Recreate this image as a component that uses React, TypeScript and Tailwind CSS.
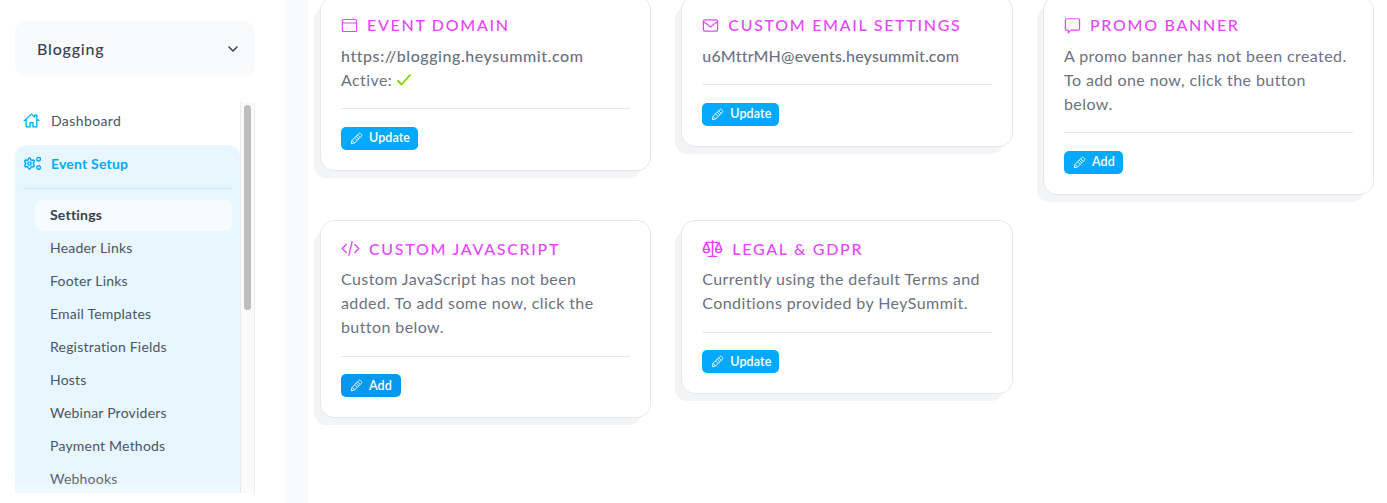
import React from 'react';
import { Settings } from 'lucide-react';

const font = "font-['Lato','Noto_Sans',sans-serif]";

function Icon({ children, className }: { children: React.ReactNode; className: string }) {
  return (
    <svg viewBox="0 0 24 24" fill="none" stroke="currentColor" strokeWidth="1.7" strokeLinecap="round" strokeLinejoin="round" className={className}>
      {children}
    </svg>
  );
}

function PencilIcon() {
  return (
    <svg viewBox="0 0 16 16" fill="none" stroke="currentColor" strokeWidth="1.1" strokeLinejoin="round" className="w-[13px] h-[13px] shrink-0">
      <path d="M1.5 14.5l1-4.2L10.8 2a1.6 1.6 0 012.3 0l.9.9a1.6 1.6 0 010 2.3l-8.3 8.3-4.2 1z" />
      <path d="M9.4 3.4l3.2 3.2M7.6 5.2l3.2 3.2M5.6 7.2l3.2 3.2M2.6 10.3l3.1 3.1" />
    </svg>
  );
}

function ActionButton({ label, dark }: { label: string; dark?: boolean }) {
  return (
    <button className={`flex items-center h-[23px] pl-[9px] gap-[6px] rounded-[5px] text-white text-[12.5px] font-semibold tracking-[0.1px] ${dark ? 'bg-[#0598ee] pr-[9px]' : 'bg-[#02a9fc] pr-[8px]'}`}>
      <PencilIcon />
      {label}
    </button>
  );
}

function Card({ icon, title, button, dark, children }: { icon: React.ReactNode; title: string; button: string; dark?: boolean; children: React.ReactNode }) {
  return (
    <div className="bg-white border border-[#e5e7eb] rounded-[14px] px-5 pt-4 pb-5 shadow-[-8px_9px_0_-2px_#f3f4f6]">
      <div className="flex items-center h-6 gap-[9px] text-[#e546fb] mb-[6.5px]">
        {icon}
        <h3 className="text-[16px] font-medium uppercase tracking-[1.7px] leading-6">{title}</h3>
      </div>
      <div className="text-[16px] leading-6 text-[#6b7280] tracking-[0.41px]">{children}</div>
      <div className="border-t border-[#e5e7eb] mt-[16.5px] mb-[17.5px]" />
      <div className="flex">
        <ActionButton label={button} dark={dark} />
      </div>
    </div>
  );
}

const subItems = ['Header Links', 'Footer Links', 'Email Templates', 'Registration Fields', 'Hosts', 'Webinar Providers', 'Payment Methods', 'Webhooks'];

export default function App() {
  return (
    <div className={`flex h-[503px] w-[1387px] overflow-hidden bg-white ${font}`}>
      {/* Sidebar */}
      <aside className="w-[285px] shrink-0 pl-[15px] pr-[30px] pt-[21px]">
        <div className="flex items-center justify-between h-[56px] pl-[22px] pr-[14px] bg-[#f9fafb] rounded-xl text-[#374151]">
          <span className="text-[16px] font-medium tracking-[0.8px]">Blogging</span>
          <Icon className="w-4 h-4"><path d="M6 9l6 6 6-6" strokeWidth="2.2" /></Icon>
        </div>

        <div className="flex mt-[25px] h-[391px] overflow-hidden">
          <nav className="w-[225px] shrink-0 relative">
            <a className="flex items-center h-[37px] mb-[6px] pl-[8px] gap-[11px] text-[14px] text-[#4b5563] tracking-[0.4px]">
              <svg viewBox="0 0 24 24" fill="none" stroke="#02a9fc" strokeWidth="1.8" strokeLinecap="round" strokeLinejoin="round" className="w-[17px] h-[17px] shrink-0">
                <path d="M1.5 12.5L12 3l4.5 4V4.5h3V10l3 2.5M4.5 10.5V21H10v-6h4v6h5.5V10.5" />
              </svg>
              Dashboard
            </a>
            <div className="bg-[#e8f6ff] rounded-t-xl h-[348px]">
              <a className="flex items-center h-[37px] mb-[6px] pl-[8px] gap-[10px] text-[14px] font-bold text-[#02a9fc] tracking-[0.2px]">
                <svg viewBox="0 0 18 13" fill="none" stroke="currentColor" className="w-[18px] h-[13px] shrink-0">
                  <Settings x="0" y="0" width="13" height="13" strokeWidth="2.7" />
                  <circle cx="15.6" cy="2.2" r="1.8" strokeWidth="1.4" />
                  <circle cx="15.6" cy="10.6" r="1.8" strokeWidth="1.4" />
                </svg>
                Event Setup
              </a>
              <div className="border-t border-[#c8ecfe] mx-[8px]" />
              <ul className="pl-[20px] pr-[8px] pt-[11px] text-[14px] text-[#4b5563] tracking-[0.015em]">
                <li className="flex items-center h-[31px] pl-[15px] pb-[3px] rounded-lg bg-[#f5fbff] font-bold text-[#374151]">Settings</li>
                {subItems.map((item) => (
                  <li key={item} className="flex items-center h-[33px] pl-[15px]">{item}</li>
                ))}
              </ul>
            </div>
            <div className="absolute bottom-0 inset-x-0 h-5 bg-gradient-to-b from-[#ffffff00] to-[#ffffff50]" />
          </nav>
          <div className="w-[15px] shrink-0 bg-[#fafafa] border-x border-[#ebebeb] px-[3px] pt-[3px]">
            <div className="h-[205px] rounded-full bg-[#bdbdbd]" />
          </div>
        </div>
      </aside>

      <div className="w-[23px] shrink-0 bg-[#f9fafb]" />

      {/* Cards */}
      <main className="flex-1 pl-3 -mt-1">
        <div className="grid grid-cols-[331px_331.4px_331px] gap-x-[30.3px] gap-y-[25.4px] items-start">
          <Card
            title="Event Domain"
            button="Update"
            icon={<Icon className="w-[17px] h-[17px] shrink-0"><rect x="2" y="3.5" width="20" height="17" rx="1.5" /><path d="M2 8.5h20" /></Icon>}
          >
            <p className="font-medium tracking-[0.55px]">https://blogging.heysummit.com</p>
            <p className="flex items-center gap-[4px]">
              Active:
              <svg viewBox="0 0 16 16" fill="none" stroke="#7ed300" strokeWidth="1.8" className="w-[16px] h-[16px]"><path d="M1.5 8.5l4 4L14.5 2.5" /></svg>
            </p>
          </Card>
          <Card
            title="Custom Email Settings"
            button="Update"
            icon={<Icon className="w-[17px] h-[17px] shrink-0"><rect x="2" y="4" width="20" height="16" rx="2" /><path d="M2.5 6.5L12 14l9.5-7.5" /></Icon>}
          >
            <p className="font-medium tracking-[0.17px]">u6MttrMH@events.heysummit.com</p>
          </Card>
          <Card
            title="Promo Banner"
            button="Add"
            icon={<Icon className="w-[17px] h-[17px] shrink-0"><path d="M4 2.5h16a2 2 0 012 2v12a2 2 0 01-2 2H10l-4 4v-4H4a2 2 0 01-2-2v-12a2 2 0 012-2z" /></Icon>}
          >
            A promo banner has not been created. To add one now, click the button below.
          </Card>
          <Card
            title="Custom JavaScript"
            button="Add"
            dark
            icon={<Icon className="w-[19px] h-[19px] shrink-0"><path d="M6.5 7L1.5 12l5 5M17.5 7l5 5-5 5M14 3.5l-4 17" /></Icon>}
          >
            Custom JavaScript has not been<br />added. To add some now, click the<br />button below.
          </Card>
          <Card
            title="Legal & GDPR"
            button="Update"
            icon={<Icon className="w-[21px] h-[21px] shrink-0"><path d="M12 3v17M7 21h10M5 5h14M5 5l-3.5 8h7zM19 5l-3.5 8h7zM1.5 13a3.5 3.5 0 007 0M15.5 13a3.5 3.5 0 007 0" /></Icon>}
          >
            Currently using the default Terms and Conditions provided by HeySummit.
          </Card>
        </div>
      </main>
    </div>
  );
}
